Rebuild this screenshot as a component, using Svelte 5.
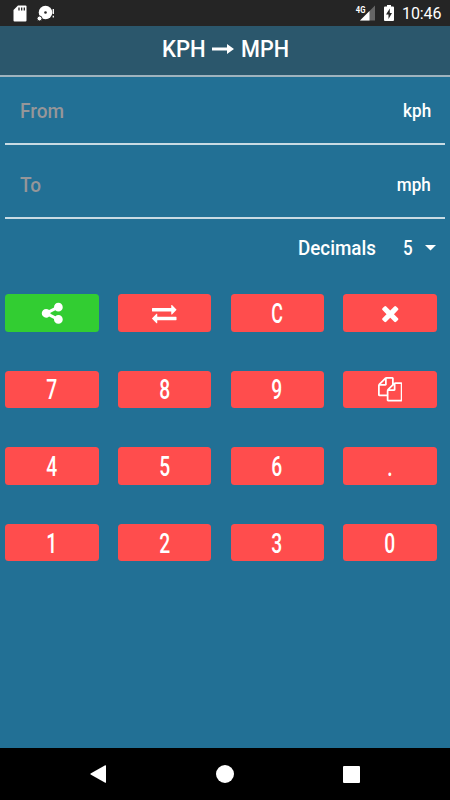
<script lang="ts">
	const icons: Record<string, string> = {
		share: 'M1344 1024q133 0 226.5 93.5t93.5 226.5-93.5 226.5-226.5 93.5-226.5-93.5-93.5-226.5q0-12 2-34l-360-180q-92 86-218 86-133 0-226.5-93.5t-93.5-226.5 93.5-226.5 226.5-93.5q126 0 218 86l360-180q-2-22-2-34 0-133 93.5-226.5t226.5-93.5 226.5 93.5 93.5 226.5-93.5 226.5-226.5 93.5q-126 0-218-86l-360 180q2 22 2 34t-2 34l360 180q92-86 218-86z',
		swap: 'M1792 1184v192q0 13-9.5 22.5t-22.5 9.5h-1376v192q0 13-9.5 22.5t-22.5 9.5q-12 0-24-10l-319-320q-9-9-9-22 0-14 9-23l320-320q9-9 23-9 13 0 22.5 9.5t9.5 22.5v192h1376q13 0 22.5 9.5t9.5 22.5zm0-544q0 14-9 23l-320 320q-9 9-23 9-13 0-22.5-9.5t-9.5-22.5v-192h-1376q-13 0-22.5-9.5t-9.5-22.5v-192q0-13 9.5-22.5t22.5-9.5h1376v-192q0-14 9-23t23-9q12 0 24 10l319 319q9 9 9 23z',
		remove: 'M1490 1322q0 40-28 68l-136 136q-28 28-68 28t-68-28l-294-294-294 294q-28 28-68 28t-68-28l-136-136q-28-28-28-68t28-68l294-294-294-294q-28-28-28-68t28-68l136-136q28-28 68-28t68 28l294 294 294-294q28-28 68-28t68 28l136 136q28 28 28 68t-28 68l-294 294 294 294q28 28 28 68z',
		copy: 'M1696 384q40 0 68 28t28 68v1216q0 40-28 68t-68 28h-960q-40 0-68-28t-28-68v-288h-544q-40 0-68-28t-28-68v-672q0-40 20-88t48-76l408-408q28-28 76-48t88-20h416q40 0 68 28t28 68v328q68-40 128-40h416zm-544 213l-299 299h299v-299zm-640-384l-299 299h299v-299zm196 647l316-316v-416h-384v416q0 40-28 68t-68 28h-416v640h512v-256q0-40 20-88t48-76zm956 804v-1152h-384v416q0 40-28 68t-68 28h-416v640h896z'
	};

	const keys = [
		'share', 'swap', 'C', 'remove',
		'7', '8', '9', 'copy',
		'4', '5', '6', '.',
		'1', '2', '3', '0'
	];
</script>

<div class="screen">
	<div class="status">
		<svg class="sd" width="14" height="17" viewBox="0 0 14 17">
			<path fill="#fff" d="M5 .5h7.5q1 0 1 1v14q0 1-1 1h-11q-1 0-1-1V5z" />
			<path stroke="#252525" stroke-width="1.3" d="M6 2.5v3M8.7 2.5v3M11.3 2.5v3" />
		</svg>
		<svg class="disc" width="18" height="17" viewBox="0 0 18 17">
			<circle cx="8.5" cy="7.5" r="6.8" fill="#fff" />
			<circle cx="8.5" cy="7.5" r="1.3" fill="#252525" />
			<circle cx="2.5" cy="13.5" r="2.5" fill="#fff" stroke="#252525" stroke-width="1" />
			<path stroke="#fff" stroke-width="1.3" d="M16.3 4v5M16.3 10.7v1.7" />
		</svg>
		<div class="right">
			<svg class="signal" width="21" height="17" viewBox="0 0 21 17">
				<path fill="#666" d="M20 .5v15H5z" />
				<path fill="#252525" d="M0 0h11v9H0z" />
				<path fill="#fff" d="M14.5 6v9.5H5z" />
				<text class="net" x="0.8" y="8" textLength="9.6" lengthAdjust="spacingAndGlyphs">4G</text>
			</svg>
			<svg class="battery" width="10" height="16" viewBox="0 0 10 16">
				<path fill="#fff" d="M3 0h4v1.5h2q1 0 1 1V15q0 1-1 1H1q-1 0-1-1V2.5q0-1 1-1h2z" />
				<path fill="#252525" d="M5.8 3.5L2 9.5h2.5V14L8 8H5.8z" />
			</svg>
			<span class="time">10:46</span>
		</div>
	</div>

	<header>
		<span class="word kph">KPH</span>
		<svg width="22" height="10" viewBox="0 0 22 10">
			<path fill="#fff" d="M0 3.6h15V0L22 5l-7 5V6.4H0z" />
		</svg>
		<span class="word mph">MPH</span>
	</header>

	<main>
		<div class="field">
			<span class="label">From</span>
			<span class="unit">kph</span>
		</div>
		<div class="field second">
			<span class="label">To</span>
			<span class="unit">mph</span>
		</div>
		<div class="decimals">
			<span class="dec-label">Decimals</span>
			<span class="dec-value">5</span>
			<svg width="11" height="6" viewBox="0 0 11 6"><path fill="#fff" d="M0 0h11L5.5 5.5z" /></svg>
		</div>
		<div class="keypad">
			{#each keys as key}
				<button class:green={key === 'share'}>
					{#if icons[key]}
						<svg width="24.5" height="24.5" viewBox="0 0 1792 1792">
							<path fill="#fff" d={icons[key]} />
						</svg>
					{:else}
						<span class="digit" class:letter={key === 'C'}>{key}</span>
					{/if}
				</button>
			{/each}
		</div>
	</main>

	<nav>
		<svg width="16" height="18" viewBox="0 0 16 18"><path fill="#fff" d="M16 .8v16.4q0 .8-.8.5L.6 9.6Q0 9 .6 8.4L15.2.3q.8-.3.8.5z" /></svg>
		<svg width="18" height="18" viewBox="0 0 18 18"><circle cx="9" cy="9" r="9" fill="#fff" /></svg>
		<svg width="17" height="17" viewBox="0 0 17 17"><rect width="17" height="17" rx="1" fill="#fff" /></svg>
	</nav>
</div>

<style>
	:global(body) {
		margin: 0;
	}
	.screen {
		width: 450px;
		height: 800px;
		display: flex;
		flex-direction: column;
		overflow: hidden;
		background: #227095;
		color: #fff;
		font-family: Roboto, sans-serif;
	}
	.status {
		box-sizing: border-box;
		height: 26px;
		flex: none;
		display: flex;
		align-items: flex-start;
		padding: 4px 9px 0 13px;
		background: #252525;
	}
	.sd {
		margin-top: 0.5px;
	}
	.disc {
		margin-left: 10px;
		margin-top: 1px;
	}
	.right {
		margin-left: auto;
		display: flex;
		align-items: flex-start;
	}
	.signal {
		margin-top: 1px;
	}
	.net {
		font-size: 9px;
		font-weight: 700;
		fill: #fff;
	}
	.battery {
		margin: 1px 0 0 8px;
	}
	.time {
		margin-left: 8px;
		width: 39px;
		font-size: 16px;
		line-height: 20px;
		letter-spacing: -0.1px;
		white-space: nowrap;
	}
	header {
		box-sizing: border-box;
		height: 51px;
		flex: none;
		display: flex;
		align-items: center;
		padding: 0 0 3px 161.5px;
		background: #2b576c;
		border-bottom: 2px solid #9fb3be;
	}
	.word {
		font-size: 24px;
		font-weight: 500;
		line-height: 28px;
		transform-origin: left center;
	}
	.kph {
		width: 50.5px;
		transform: scaleX(0.92);
	}
	.mph {
		margin-left: 6.5px;
		transform: scaleX(0.9);
	}
	main {
		flex: 1;
		display: flex;
		flex-direction: column;
	}
	.field {
		box-sizing: border-box;
		height: 68px;
		margin: 0 5px;
		padding: 1px 14px 0 15px;
		display: flex;
		align-items: center;
		justify-content: space-between;
		border-bottom: 2px solid #c9dbe4;
		font-size: 20px;
		line-height: 24px;
	}
	.second {
		height: 74px;
		padding-top: 7px;
	}
	.label {
		color: #969699;
		font-weight: 500;
		transform: scaleX(0.95);
		transform-origin: left center;
	}
	.unit {
		font-size: 19px;
		font-weight: 500;
		transform: scaleX(0.9);
		transform-origin: right center;
	}
	.decimals {
		height: 58px;
		margin-bottom: 1px;
		display: flex;
		align-items: center;
		padding-left: 297.5px;
		font-size: 20px;
		font-weight: 500;
		line-height: 24px;
	}
	.dec-label {
		width: 105px;
		transform: scaleX(0.94);
		transform-origin: left center;
	}
	.dec-value {
		width: 22.5px;
		transform: scaleX(0.85);
		transform-origin: left center;
	}
	.keypad {
		display: grid;
		grid-template-columns: repeat(4, 93.4px);
		grid-auto-rows: 37.5px;
		gap: 39.1px 19.2px;
		padding: 16px 0 0 5.4px;
	}
	button {
		display: flex;
		align-items: center;
		justify-content: center;
		padding: 0;
		border: none;
		border-radius: 3.5px;
		background: #ff4d4d;
		color: #fff;
		font-family: inherit;
	}
	button.green {
		background: #32cd32;
	}
	.digit {
		font-size: 27.5px;
		font-weight: 500;
		line-height: 37px;
		padding-top: 1px;
		transform: scaleX(0.7);
	}
	.letter {
		transform: scaleX(0.65);
	}
	nav {
		height: 52px;
		flex: none;
		display: flex;
		align-items: center;
		justify-content: space-between;
		box-sizing: border-box;
		padding: 0 90px;
		background: #000;
	}
</style>
